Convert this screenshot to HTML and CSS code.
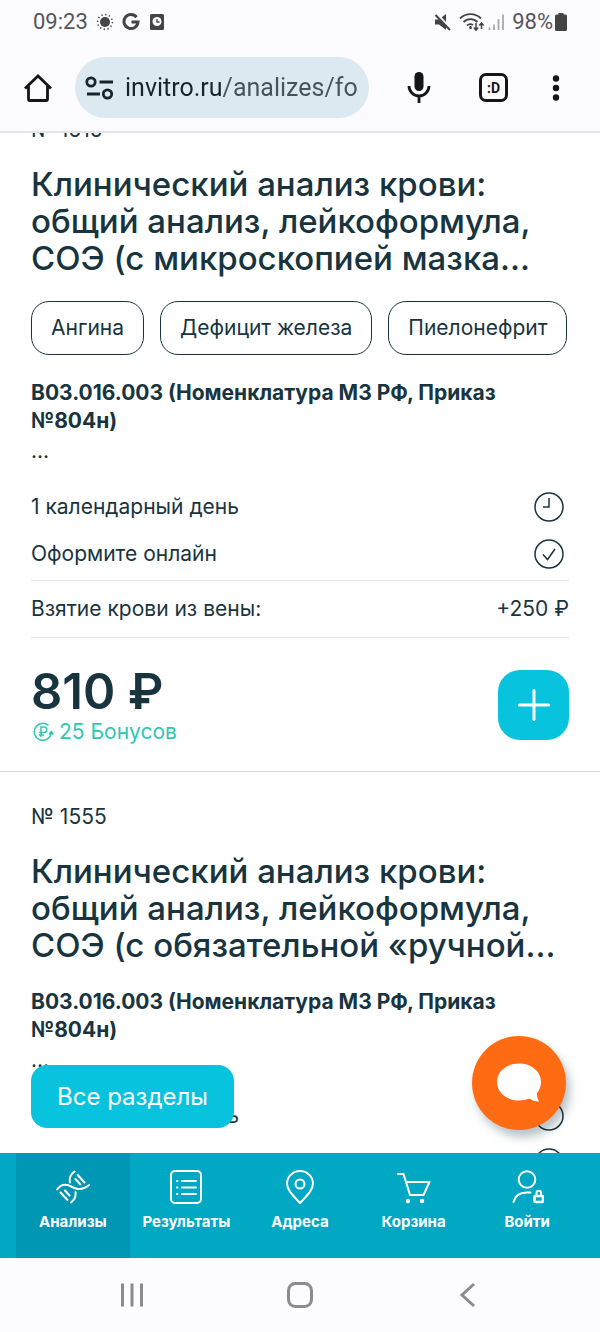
FILE: index.html
```html
<!DOCTYPE html>
<html lang="ru">
<head>
<meta charset="utf-8">
<meta name="viewport" content="width=device-width, initial-scale=1">
<title>Анализы</title>
<link rel="stylesheet" href="styles.css">
</head>
<body>
<div class="phone">
  <header class="browser">
    <div class="status">
      <div class="status-group">
        <span>09:23</span>
        <svg class="ic-sun" width="18" height="18" viewBox="0 0 18 18"><circle cx="9" cy="9" r="5" fill="#444"/><circle cx="9" cy="9" r="7.4" fill="none" stroke="#444" stroke-width="1.6" stroke-dasharray="1.3 2.57"/></svg>
        <svg class="ic-google" width="18" height="18" viewBox="0 0 18 18"><path d="M14.5 4.2A7 7 0 1 0 16 9H9.5" fill="none" stroke="#444" stroke-width="3"/></svg>
        <svg width="16" height="18" viewBox="0 0 16 18"><rect x="1" y="1" width="14" height="16" rx="1.5" fill="#444"/><circle cx="8" cy="8.500" r="4.500" fill="#fcfbff"/><path d="M8 6v3h2.500" fill="none" stroke="#444" stroke-width="1.300"/></svg>
      </div>
      <div class="status-group status-right">
        <svg width="18" height="18" viewBox="0 0 18 18"><path d="M1 6.500h4l7-5.500v16l-7-5.500H1z" fill="#444"/><path d="M2 .5 17.500 17" stroke="#fcfbff" stroke-width="3"/><path d="M1.500 2 16 17" stroke="#444" stroke-width="2"/></svg>
        <svg class="ic-wifi" width="26" height="20" viewBox="0 0 26 20"><g fill="none" stroke="#444" stroke-width="1.800"><path d="M1 6.500a15 15 0 0 1 21 0M4.500 10a10 10 0 0 1 14 0M8 13.500a5 5 0 0 1 6-.5"/></g><circle cx="11.500" cy="15.500" r="1.500" fill="#444"/><path d="M17 11v7m-2.200-2.500L17 18l2.200-2.500M22.500 17v-6m-2.200 2.500 2.200-2.500 2.200 2.500" fill="none" stroke="#444" stroke-width="1.500"/></svg>
        <svg class="ic-signal" width="17" height="18" viewBox="0 0 17 18"><path d="M1.500 14.500V17M6 11.500V17M10.500 6v11M15 1.500V17" stroke="#a9a9ad" stroke-width="1.800"/></svg>
        <span>98%</span>
        <svg class="ic-battery" width="12" height="18" viewBox="0 0 12 18"><path d="M3.500 0h5v1.500h2A1.500 1.500 0 0 1 12 3v13.500a1.500 1.500 0 0 1-1.500 1.500h-9A1.500 1.500 0 0 1 0 16.500V3a1.500 1.500 0 0 1 1.500-1.500h2z" fill="#444"/></svg>
      </div>
    </div>
    <div class="toolbar">
      <button class="tool" type="button" aria-label="Домой"><svg width="30" height="30" viewBox="0 0 30 30"><path d="M2 15.500 15 3l13 12.500M5.500 13v13q0 1.500 1.500 1.500h16q1.500 0 1.500-1.500V13" fill="none" stroke="#15161a" stroke-width="2.800"/></svg></button>
      <label class="omnibox">
        <svg width="30" height="26" viewBox="0 0 30 26" fill="none" stroke="#18232b" stroke-width="2.800"><circle cx="6" cy="7" r="4.200"/><path d="M14.500 7H28M2 19h13"/><circle cx="22.500" cy="19" r="4.200"/></svg>
        <input class="url" type="text" aria-label="Адрес страницы" value="invitro.ru/analizes/fo">
      </label>
      <button class="tool tool-mic" type="button" aria-label="Голосовой поиск"><svg width="26" height="34" viewBox="0 0 26 34"><rect x="8.500" y="1" width="9" height="19" rx="4.500" fill="#15161a"/><path d="M3 15a10 10 0 0 0 20 0M13 25v7" fill="none" stroke="#15161a" stroke-width="2.800"/></svg></button>
      <button class="tool tabs" type="button" aria-label="Вкладки">:D</button>
      <button class="tool" type="button" aria-label="Меню"><svg width="8" height="26" viewBox="0 0 8 26" fill="#15161a"><circle cx="4" cy="3.500" r="3.200"/><circle cx="4" cy="13" r="3.200"/><circle cx="4" cy="22.500" r="3.200"/></svg></button>
    </div>
  </header>

  <div class="viewport">
    <main class="list">
      <article class="card">
        <p class="number">№ 1515</p>
        <h2 class="title">Клинический анализ крови: общий анализ, лейкоформула, СОЭ (с микроскопией мазка...</h2>
        <div class="tags">
          <button class="tag" type="button">Ангина</button>
          <button class="tag" type="button">Дефицит железа</button>
          <button class="tag" type="button">Пиелонефрит</button>
        </div>
        <p class="code">B03.016.003 (Номенклатура МЗ РФ, Приказ №804н)</p>
        <p class="more">...</p>
        <div class="facts">
          <div class="fact"><span>1 календарный день</span><svg class="fact-icon" width="30" height="30" viewBox="0 0 30 30"><circle cx="15" cy="15" r="14"/><path d="M15 6v9H9"/></svg></div>
          <div class="fact"><span>Оформите онлайн</span><svg class="fact-icon" width="30" height="30" viewBox="0 0 30 30"><circle cx="15" cy="15" r="14"/><path d="m9 15.500 4.500 5L21 10"/></svg></div>
        </div>
        <div class="fee"><span>Взятие крови из вены:</span><span>+250 ₽</span></div>
        <div class="buy">
          <div>
            <p class="price">810 ₽</p>
            <p class="bonus"><svg width="21" height="20" viewBox="0 0 21 20" fill="none" stroke="#2cc9b0" stroke-width="1.500"><path d="M15.500 3.500A8.500 8.500 0 1 0 18.300 10.500M16 12.500l2.300-3 2 3M8 15V5h3a2.700 2.700 0 0 1 0 5.500H6M6 13h5"/></svg>25 Бонусов</p>
          </div>
          <button class="add" type="button" aria-label="Добавить в корзину"><svg width="32" height="32" viewBox="0 0 32 32"><path d="M16 1.500v29M1.500 16h29" stroke="#fff" stroke-width="3" stroke-linecap="round"/></svg></button>
        </div>
      </article>
      <article class="card">
        <p class="number">№ 1555</p>
        <h2 class="title">Клинический анализ крови: общий анализ, лейкоформула, СОЭ (с обязательной «ручной...</h2>
        <p class="code">B03.016.003 (Номенклатура МЗ РФ, Приказ №804н)</p>
        <p class="more">...</p>
        <div class="facts">
          <div class="fact"><span>1 календарный день</span><svg class="fact-icon" width="30" height="30" viewBox="0 0 30 30"><circle cx="15" cy="15" r="14"/><path d="M15 6v9H9"/></svg></div>
          <div class="fact"><span>Оформите онлайн</span><svg class="fact-icon" width="30" height="30" viewBox="0 0 30 30"><circle cx="15" cy="15" r="14"/><path d="m9 15.500 4.500 5L21 10"/></svg></div>
        </div>
      </article>
    </main>
    <button class="sections" type="button">Все разделы</button>
    <button class="chat" type="button" aria-label="Чат"><svg width="46" height="42" viewBox="0 0 46 42"><path d="M23 1.500c12 0 22 7.500 22 18.500 0 4.500-1.500 8-4 11q-.5 4 2 8.500-6 0-9.500-3-5 2-10.500 2C11 38.500 1 31 1 20S11 1.500 23 1.500z" fill="#fff"/></svg></button>
  </div>

  <nav class="tabbar">
    <a class="tab tab-active" href="#"><svg class="tab-icon" width="34" height="34" viewBox="0 0 34 34"><path d="M1 19.500c3-4 6.500-5.500 10.500-4.500 3.500.8 6 3.500 10.500 4 4 .4 8-1.500 11-4M18.500 1.500c-3.500 2.500-5.500 6.500-4.500 11M15 32.500c3.500-2.500 5-6.500 4.500-10.500M21.700 5l6.800 7.500M19.500 9l4.800 5.300M4.500 22.500l7 7.500M9 20.500l4.500 5"/></svg>Анализы</a>
    <a class="tab" href="#"><svg class="tab-icon" width="34" height="34" viewBox="0 0 34 34"><rect x="2" y="1" width="30" height="32" rx="4"/><path d="M13 11h14M13 17.500h14M13 24h14M8 11h.5M8 17.500h.5M8 24h.5"/></svg>Результаты</a>
    <a class="tab" href="#"><svg class="tab-icon" width="34" height="34" viewBox="0 0 34 34"><path d="M17 33C11 26.500 4 20.500 4 13.500a13 12.500 0 0 1 26 0C30 20.500 23 26.500 17 33z"/><circle cx="17" cy="14" r="4.500"/></svg>Адреса</a>
    <a class="tab" href="#"><svg class="tab-icon" width="34" height="34" viewBox="0 0 34 34"><path d="M1 4h5.500L13 25h13.500l6-13H9"/><circle class="dot" cx="11" cy="31" r="2.200"/><circle class="dot" cx="25" cy="31" r="2.200"/></svg>Корзина</a>
    <a class="tab" href="#"><svg class="tab-icon" width="34" height="34" viewBox="0 0 34 34"><circle cx="17" cy="9.500" r="8.300"/><path d="M3.500 32C5 25.500 10 22.500 17 22.500h3.500"/><rect x="24.500" y="26" width="8.500" height="6" rx="1" stroke-width="2.600"/><path d="M26.500 25v-2a2.300 2.300 0 0 1 4.600 0v2"/></svg>Войти</a>
  </nav>
  <div class="system">
    <button class="sys" type="button" aria-label="Недавние"><svg width="26" height="26" viewBox="0 0 26 26"><path d="M3.500 1.500v23M13 1.500v23M22.500 1.500v23"/></svg></button>
    <button class="sys" type="button" aria-label="Главный экран"><svg width="26" height="26" viewBox="0 0 26 26"><rect x="1.500" y="1.500" width="23" height="23" rx="7"/></svg></button>
    <button class="sys" type="button" aria-label="Назад"><svg width="26" height="26" viewBox="0 0 26 26"><path d="M19 2 7 13l12 11"/></svg></button>
  </div>
</div>
</body>
</html>
```
FILE: styles.css
```css
* { box-sizing: border-box; }
body, h2, p { margin: 0; }
button { border: 0; padding: 0; background: none; font: inherit; color: inherit; cursor: pointer; }
a { color: inherit; text-decoration: none; }
svg { display: block; flex: none; }

.phone {
  display: flex;
  flex-direction: column;
  height: 100vh;
  background: #fff;
  color: #18343f;
  font: 400 21px/28px Inter, "Noto Sans", sans-serif;
}

.browser {
  flex: none;
  border-bottom: 2px solid #e3e3e8;
  background: #fcfbff;
  font-family: Roboto, sans-serif;
}
.status {
  display: flex;
  justify-content: space-between;
  padding: 8px 33px 8px;
  color: #55555a;
  font-size: 22px;
}
.status-group { display: flex; align-items: center; }
.ic-sun { margin: 0 8px; }
.ic-google { margin-right: 9px; }
.ic-wifi { margin: 0 3px 0 7px; }
.ic-signal { margin-right: 7px; }
.ic-battery { margin-left: 2px; }

.toolbar {
  display: flex;
  align-items: center;
  padding: 13px 40px 13px 23px;
}
.tool { flex: none; }
.omnibox {
  display: flex;
  flex: 1;
  align-items: center;
  gap: 10px;
  min-width: 0;
  height: 61px;
  margin: 0 37px 0 22px;
  padding: 0 12px 0 10px;
  border-radius: 31px;
  background: #dce9f1;
}
.url {
  flex: 1;
  min-width: 0;
  padding: 0;
  border: 0;
  outline: 0;
  background: linear-gradient(to right, #18232b 98px, #46535c 98px);
  background-clip: text;
  color: transparent;
  font: 400 25px/32px Roboto, sans-serif;
}
.tool-mic { margin-right: 47px; }
.tabs {
  width: 29px;
  height: 29px;
  margin-right: 44px;
  border: 3px solid #15161a;
  border-radius: 7px;
  color: #15161a;
  font-size: 14px;
  font-weight: 700;
  line-height: 22px;
}

.viewport {
  position: relative;
  flex: 1;
  min-height: 0;
  overflow: hidden;
}
.list { margin-top: -48px; }
.card {
  padding: 31px 31px 25px;
  border-bottom: 1px solid #d9dde0;
}
.title {
  margin: 22px 0 24px;
  font-size: 33px;
  font-weight: 500;
  line-height: 37px;
}
.tags {
  display: flex;
  gap: 16px;
  margin-bottom: 24px;
}
.tag {
  height: 54px;
  padding: 0 19px;
  border: 1px solid #18343f;
  border-radius: 18px;
  white-space: nowrap;
}
.code { font-weight: 700; }
.more { padding-top: 2px; }
.facts { padding: 18px 0 3px; }
.fact {
  display: flex;
  align-items: center;
  justify-content: space-between;
  height: 47px;
  padding-right: 5px;
}
.fact-icon { fill: none; stroke: #18343f; stroke-width: 1.5; }
.fee {
  display: flex;
  justify-content: space-between;
  padding: 14px 0;
  border: solid #e4e7e9;
  border-width: 1px 0;
}
.buy {
  display: flex;
  justify-content: space-between;
  padding-top: 32px;
}
.price { font-size: 49px; font-weight: 600; line-height: 44px; }
.bonus {
  display: flex;
  align-items: center;
  gap: 5px;
  padding: 4px 0 0 2px;
  color: #2cc9b0;
}
.add {
  display: grid;
  place-items: center;
  width: 71px;
  height: 70px;
  border-radius: 22px;
  background: #08c3de;
}

.sections {
  position: absolute;
  bottom: 25px;
  left: 31px;
  padding: 16px 26px;
  border-radius: 16px;
  background: #08c3de;
  color: #fff;
  font-size: 24px;
  line-height: 31px;
}
.chat {
  position: absolute;
  right: 34px;
  bottom: 23px;
  display: grid;
  place-items: center;
  width: 94px;
  height: 94px;
  border-radius: 50%;
  background: #ff6b12;
  box-shadow: 4px 7px 10px rgba(24, 52, 63, 0.3);
}

.tabbar {
  display: flex;
  flex: none;
  padding: 0 16px;
  background: #00a8c3;
  color: #fff;
  font-size: 15px;
  font-weight: 700;
  line-height: 20px;
}
.tab {
  display: flex;
  flex: 1;
  flex-direction: column;
  align-items: center;
  gap: 8px;
  min-width: 0;
  padding: 17px 0 26px;
}
.tab-active { background: #0097b4; }
.tab-icon { fill: none; stroke: #fff; stroke-width: 2; stroke-linecap: round; stroke-linejoin: round; }
.dot { fill: #fff; stroke: none; }

.system {
  display: flex;
  flex: none;
  padding: 0 48px;
  background: #fcfbff;
}
.sys {
  display: grid;
  flex: 1;
  place-items: center;
  height: 74px;
  fill: none;
  stroke: #8b8b8f;
  stroke-width: 3;
}
```
